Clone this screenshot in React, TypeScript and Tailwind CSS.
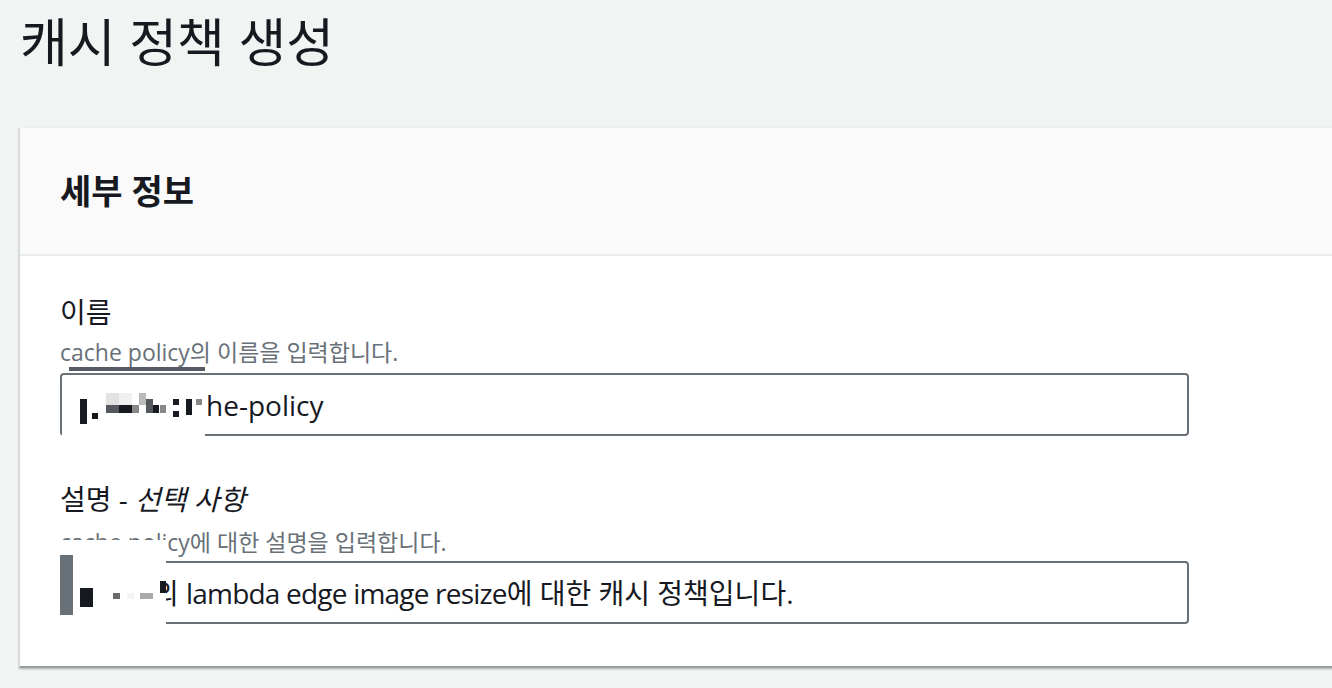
import React from 'react';

const font = { fontFamily: '"Open Sans", "Noto Sans CJK KR", sans-serif' };

// pixelated redaction blocks over the first input: [left, top, width, height, colour]
const nameBlur: Array<[number, number, number, number, string]> = [
  [0, 8, 7, 25, 'bg-[#16191f]'],
  [12, 22, 6, 6, 'bg-[#16191f]'],
  [26, 2, 13, 12, 'bg-[#e2e2e2]'],
  [26, 14, 13, 8, 'bg-[#55595e]'],
  [39, 2, 13, 12, 'bg-[#f0f0f0]'],
  [39, 14, 13, 8, 'bg-[#16191f]'],
  [52, 14, 7, 8, 'bg-[#888]'],
  [59, 2, 7, 12, 'bg-[#bbb]'],
  [66, 8, 7, 14, 'bg-[#55595e]'],
  [73, 14, 6, 8, 'bg-[#16191f]'],
  [80, 14, 6, 8, 'bg-[#888]'],
  [93, 8, 6, 6, 'bg-[#16191f]'],
  [93, 20, 6, 6, 'bg-[#16191f]'],
  [106, 8, 6, 16, 'bg-[#16191f]'],
  [116, 8, 6, 6, 'bg-[#888]'],
];

export default function App() {
  return (
    <div className="h-[688px] w-[1332px] overflow-hidden bg-[#f2f3f3] text-[#16191f]" style={font}>
      <h1 className="pl-[20px] pt-[10px] text-[52px] font-normal leading-[64px]">캐시 정책 생성</h1>

      <div className="ml-[19px] mt-[54px] w-[1340px] border-b-2 border-l border-[#d5dbdb] border-b-[#9ba1a3] bg-white shadow-[0_1px_2px_rgba(0,28,36,0.3)]">
        <div className="flex h-[128px] items-center border-b-2 border-[#eaeded] bg-[#fafafa] pl-[40px]">
          <h2 className="text-[34px] font-bold">세부 정보</h2>
        </div>

        <div className="flex flex-col pl-[40px] pt-[36px] pb-[42px]">
          <div className="text-[28px] leading-[40px]">이름</div>
          <div className="mt-[4px] text-[23px] leading-[32px] text-[#687078]">cache policy의 이름을 입력합니다.</div>
          <div className="relative mt-[5px]">
            <div className="flex h-[63px] w-[1129px] items-center rounded-[4px] border-2 border-[#687078] pl-[144px] text-[28px]">
              he-policy
            </div>
            <div className="absolute left-[9px] top-[-6px] h-[4px] w-[136px] bg-[#545b64]" />
            <div className="absolute left-[2px] top-[4px] h-[61px] w-[143px] bg-white">
              <div className="relative ml-[18px] mt-[14px]">
                {nameBlur.map(([l, t, w, h, c], i) => (
                  <span key={i} className={`absolute ${c}`} style={{ left: l, top: t, width: w, height: h }} />
                ))}
              </div>
            </div>
          </div>

          <div className="mt-[43px] text-[28px] leading-[40px]">
            설명 - <span className="italic">선택 사항</span>
          </div>
          <div className="mt-[7px] text-[23px] leading-[32px] text-[#687078]">cache policy에 대한 설명을 입력합니다.</div>
          <div className="relative mt-[3px]">
            <div className="flex h-[63px] w-[1129px] items-center rounded-[4px] border-2 border-[#687078] pl-[91px] text-[28px]">
              의&nbsp;<span className="tracking-[-0.8px]">lambda edge image resize</span>에 대한 캐시 정책입니다.
            </div>
            <div className="absolute left-0 top-[-21px] h-[89px] w-[106px] bg-white">
              <span className="absolute left-0 top-[15px] h-[60px] w-[13px] bg-[#687078]" />
              <span className="absolute left-[20px] top-[48px] h-[19px] w-[13px] bg-[#16191f]" />
              <span className="absolute left-[53px] top-[53px] h-[6px] w-[7px] bg-[#6b6b6b]" />
              <span className="absolute left-[67px] top-[53px] h-[6px] w-[7px] bg-[#f4f4f4]" />
              <span className="absolute left-[80px] top-[53px] h-[6px] w-[13px] bg-[#aaa]" />
              <span className="absolute left-[100px] top-[41px] h-[12px] w-[6px] bg-[#16191f]" />
            </div>
          </div>
        </div>
      </div>
    </div>
  );
}
